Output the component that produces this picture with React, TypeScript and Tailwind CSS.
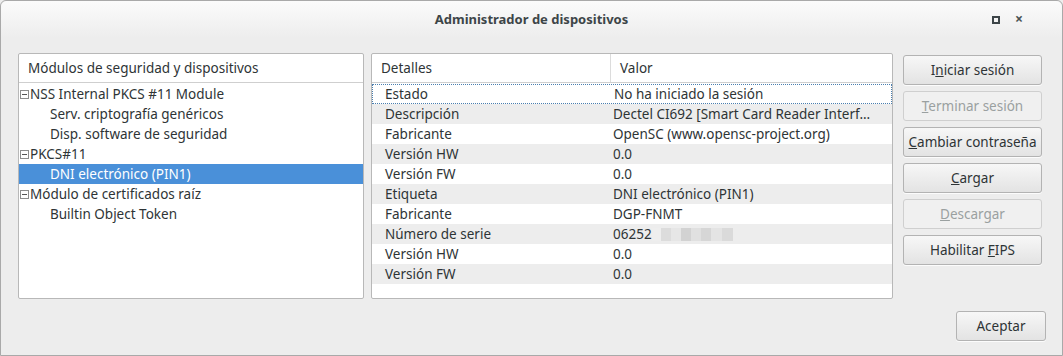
import React from 'react';

const font = { fontFamily: '"Noto Sans", "DejaVu Sans", sans-serif' };

type Row = { label: string; value: React.ReactNode };

const rows: Row[] = [
  { label: 'Estado', value: 'No ha iniciado la sesión' },
  { label: 'Descripción', value: 'Dectel CI692 [Smart Card Reader Interf...' },
  { label: 'Fabricante', value: 'OpenSC (www.opensc-project.org)' },
  { label: 'Versión HW', value: '0.0' },
  { label: 'Versión FW', value: '0.0' },
  { label: 'Etiqueta', value: 'DNI electrónico (PIN1)' },
  { label: 'Fabricante', value: 'DGP-FNMT' },
  {
    label: 'Número de serie',
    value: (
      <span className="flex items-center">
        06252
        <span className="flex h-[13px]">
          <span className="w-[9px] bg-[#eeeeee]" />
          <span className="w-[10px] bg-[#dcdcdc]" />
          <span className="w-[10px] bg-[#e6e6e6]" />
          <span className="w-[10px] bg-[#d2d2d2]" />
          <span className="w-[10px] bg-[#e0e0e0]" />
          <span className="w-[10px] bg-[#d6d6d6]" />
          <span className="w-[11px] bg-[#e4e4e4]" />
          <span className="w-[11px] bg-[#dadada]" />
        </span>
      </span>
    ),
  },
  { label: 'Versión HW', value: '0.0' },
  { label: 'Versión FW', value: '0.0' },
];

const tree: { text: string; level: number; selected?: boolean }[] = [
  { text: 'NSS Internal PKCS #11 Module', level: 0 },
  { text: 'Serv. criptografía genéricos', level: 1 },
  { text: 'Disp. software de seguridad', level: 1 },
  { text: 'PKCS#11', level: 0 },
  { text: 'DNI electrónico (PIN1)', level: 1, selected: true },
  { text: 'Módulo de certificados raíz', level: 0 },
  { text: 'Builtin Object Token', level: 1 },
];

const Expander = () => (
  <span className="mr-[1px] inline-flex h-[9px] w-[9px] items-center justify-center border border-[#8c8c8c] bg-white">
    <span className="h-[1px] w-[5px] bg-[#555]" />
  </span>
);

const DialogButton = ({
  children,
  disabled = false,
  className = '',
}: {
  children: React.ReactNode;
  disabled?: boolean;
  className?: string;
}) => (
  <div
    className={`flex h-[30px] items-center justify-center rounded-[3px] border text-[13.5px] ${
      disabled
        ? 'border-[#cfcfcf] bg-[#f0f0f0] text-[#9aa0a0]'
        : 'border-[#b3b3b3] bg-gradient-to-b from-[#f7f7f7] to-[#e3e3e3] text-[#2e3436] shadow-[0_1px_0_rgba(255,255,255,0.8)]'
    } ${className}`}
  >
    {children}
  </div>
);

export default function App() {
  return (
    <div className="h-[356px] w-[1063px] overflow-hidden bg-[#ededed]" style={font}>
      <div className="flex h-full flex-col rounded-t-[6px] border border-[#a9a9a9] bg-[#ededed]">
        {/* title bar */}
        <div className="relative flex h-[37px] shrink-0 items-center justify-center rounded-t-[6px] bg-gradient-to-b from-[#fbfbfb] to-[#ededed]">
          <span className="text-[13px] font-bold text-[#3d4548]">Administrador de dispositivos</span>
          <div className="absolute right-[62px] top-[15px] h-[8px] w-[8px] border-2 border-[#3d4548]" />
          <span className="absolute right-[39px] top-[11px] text-[14px] font-bold leading-none text-[#4a5254]">
            ×
          </span>
        </div>

        <div className="flex flex-1 px-[17px] pt-[15px]">
          {/* left tree */}
          <div className="flex h-[246px] w-[346px] flex-col rounded-[2px] border border-[#b8b8b8] bg-white text-[13.5px] text-[#2e3436]">
            <div className="flex h-[29px] items-center border-b border-[#cfcfcf] pl-[9px]">
              Módulos de seguridad y dispositivos
            </div>
            <div className="pt-[1px]">
              {tree.map((t, i) => (
                <div
                  key={i}
                  className={`flex h-[20px] items-center ${
                    t.selected ? 'bg-[#4a90d9] text-white' : ''
                  } ${t.level === 0 ? 'pl-[1px]' : 'pl-[31px]'}`}
                >
                  {t.level === 0 && <Expander />}
                  {t.text}
                </div>
              ))}
            </div>
          </div>

          {/* right table */}
          <div className="ml-[7px] flex h-[246px] w-[522px] flex-col rounded-[2px] border border-[#b8b8b8] bg-white text-[13.5px] text-[#2e3436]">
            <div className="flex h-[29px] items-center border-b border-[#cfcfcf]">
              <div className="flex h-full w-[239px] items-center border-r border-[#dcdcdc] pl-[9px]">Detalles</div>
              <div className="pl-[9px]">Valor</div>
            </div>
            <div className="pt-[1px]">
              {rows.map((r, i) => (
                <div
                  key={i}
                  className={`flex h-[20px] items-center ${i % 2 === 1 ? 'bg-[#ededed]' : ''} ${
                    i === 0 ? 'border border-dotted border-[#4a7fb0]' : ''
                  }`}
                >
                  <div className={`w-[241px] ${i === 0 ? 'pl-[12px]' : 'pl-[13px]'}`}>{r.label}</div>
                  <div className="flex-1 whitespace-nowrap">{r.value}</div>
                </div>
              ))}
            </div>
          </div>

          {/* buttons */}
          <div className="ml-[10px] flex w-[139px] flex-col gap-[6px] pt-[2px]">
            <DialogButton>
              <span>
                I<u>n</u>iciar sesión
              </span>
            </DialogButton>
            <DialogButton disabled>
              <span>
                <u>T</u>erminar sesión
              </span>
            </DialogButton>
            <DialogButton>
              <span>
                <u>C</u>ambiar contraseña
              </span>
            </DialogButton>
            <DialogButton>
              <span>
                <u>C</u>argar
              </span>
            </DialogButton>
            <DialogButton disabled>
              <span>
                <u>D</u>escargar
              </span>
            </DialogButton>
            <DialogButton>
              <span>
                Habilitar <u>F</u>IPS
              </span>
            </DialogButton>
          </div>
        </div>

        <div className="flex justify-end pb-[14px] pr-[16px]">
          <DialogButton className="w-[90px]">Aceptar</DialogButton>
        </div>
      </div>
    </div>
  );
}
